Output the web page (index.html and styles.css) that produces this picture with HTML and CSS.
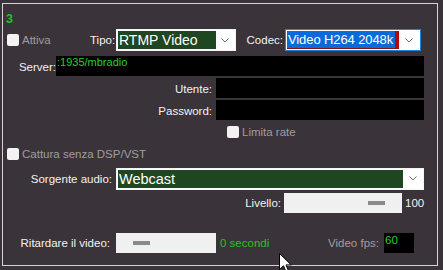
FILE: index.html
```html
<!DOCTYPE html>
<html>
<head>
<meta charset="UTF-8">
<title>Stream 3</title>
<link rel="stylesheet" href="styles.css">
</head>
<body>
<div class="panel">
	<div class="title">3</div>

	<div class="row row-type">
		<label class="check check-attiva disabled"><span class="box"></span>Attiva</label>
		<span class="lbl lbl-tipo">Tipo:</span>
		<div class="combo combo-tipo">
			<span class="value">RTMP Video</span>
			<span class="arrow"><svg width="8" height="5" viewBox="0 0 8 5"><path d="M0.5 0.5 L4 4 L7.5 0.5" fill="none" stroke="#6d6d6d" stroke-width="1"/></svg></span>
		</div>
		<span class="lbl lbl-codec">Codec:</span>
		<div class="combo combo-codec">
			<span class="value selected">Video H264 2048k</span>
			<span class="arrow"><svg width="8" height="5" viewBox="0 0 8 5"><path d="M0.5 0.5 L4 4 L7.5 0.5" fill="none" stroke="#6d6d6d" stroke-width="1"/></svg></span>
		</div>
	</div>

	<div class="row row-server">
		<span class="lbl lbl-server">Server:</span>
		<div class="field field-server">:1935/mbradio</div>
	</div>

	<div class="row row-user">
		<span class="lbl lbl-user">Utente:</span>
		<div class="field field-user"></div>
	</div>

	<div class="row row-pass">
		<span class="lbl lbl-user">Password:</span>
		<div class="field field-user"></div>
	</div>

	<div class="row row-rate">
		<label class="check disabled"><span class="box"></span>Limita rate</label>
	</div>

	<div class="row row-dsp">
		<label class="check disabled"><span class="box"></span>Cattura senza DSP/VST</label>
	</div>

	<div class="row row-source">
		<span class="lbl lbl-source">Sorgente audio:</span>
		<div class="combo combo-source">
			<span class="value">Webcast</span>
			<span class="arrow"><svg width="8" height="5" viewBox="0 0 8 5"><path d="M0.5 0.5 L4 4 L7.5 0.5" fill="none" stroke="#6d6d6d" stroke-width="1"/></svg></span>
		</div>
	</div>

	<div class="row row-level">
		<span class="lbl lbl-level">Livello:</span>
		<div class="slider slider-level"><span class="thumb"></span></div>
		<span class="lbl value-level">100</span>
	</div>

	<div class="row row-delay">
		<span class="lbl lbl-delay">Ritardare il video:</span>
		<div class="slider slider-delay"><span class="thumb"></span></div>
		<span class="green secs">0 secondi</span>
		<span class="lbl disabled lbl-fps">Video fps:</span>
		<div class="field field-fps">60</div>
	</div>
</div>

<svg class="cursor" width="13" height="21" viewBox="0 0 13 21">
	<path d="M0.5 0.5 L0.5 16.5 L4.5 12.8 L7.2 19.2 L9.6 18.2 L7 11.9 L12.2 11.9 Z" fill="#fff" stroke="#000" stroke-width="1" stroke-linejoin="miter"/>
</svg>
</body>
</html>
```

FILE: styles.css
```css
html, body {
	margin: 0;
	padding: 0;
}

body {
	background-color: #3b333a;
	font-family: "Liberation Sans", Arial, Helvetica, sans-serif;
	font-size: 11.5px;
	color: #f2f2f2;
	width: 443px;
	height: 270px;
	overflow: hidden;
	position: relative;
}

.panel {
	box-sizing: border-box;
	width: 436px;
	height: 263px;
	margin: 3px 0 0 2px;
	border: 1px solid #d4d4d4;
	display: flex;
	flex-direction: column;
}

.title {
	height: 25px;
	box-sizing: border-box;
	padding: 8px 0 0 3px;
	font-size: 12.5px;
	line-height: 14px;
	font-weight: bold;
	color: #1ec41e;
}

.row {
	display: flex;
	align-items: center;
}

.lbl {
	box-sizing: border-box;
	text-align: right;
	white-space: nowrap;
}

.disabled {
	color: #a09ca0;
}

.green {
	color: #22c422;
}

/* checkboxes */

.check {
	display: flex;
	align-items: center;
	gap: 3px;
	white-space: nowrap;
}

.check .box {
	width: 12px;
	height: 12px;
	border-radius: 2px;
	background-color: #f3f3f3;
}

/* combos */

.combo {
	box-sizing: border-box;
	display: flex;
	background-color: #fff;
	border: 1px solid #f4f4f4;
	padding: 1px;
	font-size: 14px;
}

.combo .value {
	flex: 1;
	background-color: #1e4620;
	color: #fff;
	padding-left: 1px;
	line-height: 18px;
	white-space: nowrap;
	overflow: hidden;
}

.combo .arrow {
	display: flex;
	align-items: center;
	justify-content: center;
	background-color: #fff;
}

/* top row */

.row-type {
	height: 22px;
}

.check-attiva {
	margin-left: 4px;
	width: 83px;
}

.lbl-tipo {
	width: 26px;
	padding-right: 2px;
}

.combo-tipo {
	width: 120px;
}

.combo-tipo .arrow {
	width: 18px;
}

.lbl-codec {
	width: 49px;
	padding-right: 2px;
}

.combo-codec {
	width: 136px;
	border-color: #1a86dc;
}

.combo-codec .value.selected {
	background-color: #0a6ad8;
	border-right: 4px solid #b20a0a;
	border-bottom: 1px solid #8c1212;
	line-height: 17px;
	flex: none;
	width: 112px;
	box-sizing: border-box;
	font-size: 13px;
	letter-spacing: -0.1px;
}

.combo-codec .arrow {
	flex: 1;
}

/* text fields */

.field {
	background-color: #000;
	box-sizing: border-box;
	color: #2ccd2c;
	padding-left: 1px;
	line-height: 13px;
	font-size: 11px;
}

.row-server {
	margin-top: 5px;
	height: 20px;
}

.lbl-server {
	width: 53px;
	padding-right: 0;
	margin-top: 1px;
}

.field-server {
	width: 368px;
	height: 20px;
}

.row-user,
.row-pass {
	margin-top: 2px;
	height: 20px;
}

.lbl-user {
	width: 213px;
	padding-right: 4px;
	margin-top: 1px;
}

.field-user {
	width: 208px;
	height: 20px;
}

.row-rate {
	height: 16px;
	margin-top: 4px;
	padding-left: 224px;
}

.row-dsp {
	height: 16px;
	margin-top: 6px;
	padding-left: 4px;
}

.row-source {
	margin-top: 5px;
	height: 23px;
}

.lbl-source {
	width: 113px;
	padding-right: 4px;
}

.combo-source {
	width: 308px;
	font-size: 14.5px;
}

.combo-source .arrow {
	width: 19px;
}

/* sliders */

.slider {
	background-color: #f0f0f0;
	height: 20px;
	position: relative;
}

.slider .thumb {
	position: absolute;
	top: 8px;
	height: 4px;
	width: 17px;
	background-color: #8a8a8a;
}

.row-level {
	margin-top: 3px;
	height: 20px;
}

.lbl-level {
	width: 281px;
	padding-right: 3px;
}

.slider-level {
	width: 118px;
}

.slider-level .thumb {
	left: 84px;
}

.value-level {
	margin-left: 3px;
}

.row-delay {
	margin-top: 20px;
	height: 20px;
}

.lbl-delay {
	width: 113px;
	padding-right: 6px;
}

.slider-delay {
	width: 100px;
}

.slider-delay .thumb {
	left: 17px;
}

.secs {
	margin-left: 4px;
	width: 46px;
	white-space: nowrap;
}

.lbl-fps {
	width: 118px;
	padding-right: 5px;
}

.field-fps {
	width: 30px;
	height: 20px;
	padding-top: 1px;
	font-size: 11.5px;
}

.cursor {
	position: absolute;
	left: 279px;
	top: 253px;
}
```
